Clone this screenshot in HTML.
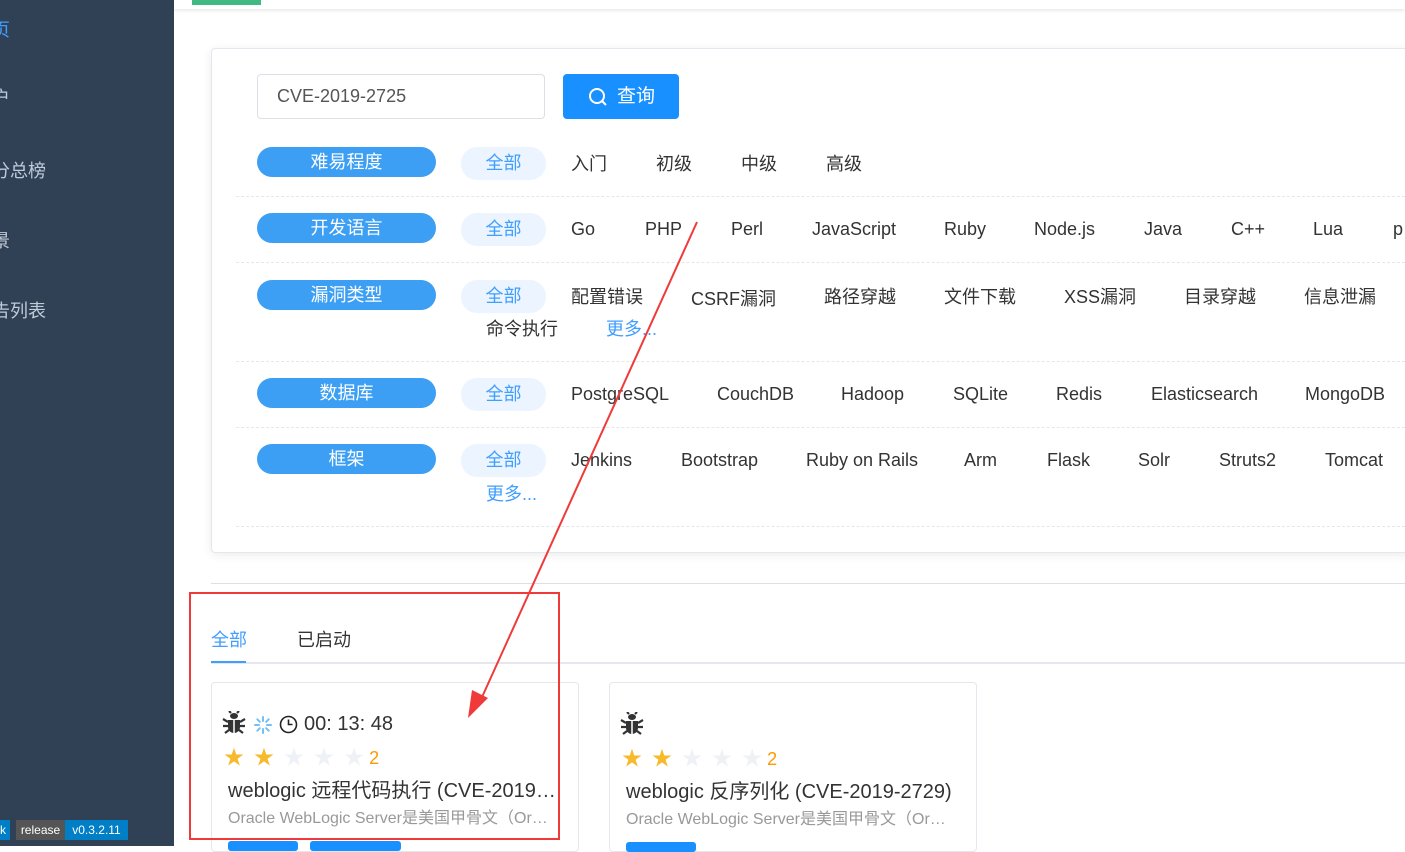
<!DOCTYPE html>
<html><head><meta charset="utf-8"><style>
*{margin:0;padding:0;box-sizing:border-box}
body{width:1405px;height:846px;overflow:hidden;background:#fff;font-family:"Liberation Sans","Noto Sans CJK SC",sans-serif;position:relative;color:#333}
.side{position:absolute;left:0;top:0;width:174px;height:846px;background:#304156}
.side div{position:absolute;left:-8px;font-size:18px;color:#bfcbd9}
.top{position:absolute;left:174px;top:0;right:0;height:9px;box-shadow:0 1px 4px rgba(0,0,0,.12)}
.green{position:absolute;left:192px;top:0;width:69px;height:5px;background:#42b983}
.card{position:absolute;left:211px;top:48px;width:1200px;height:505px;border:1px solid #e4e7ed;border-radius:4px;box-shadow:0 2px 10px rgba(0,0,0,.08)}
.a{position:absolute;font-size:18px;white-space:nowrap}
.lab{position:absolute;left:257px;width:179px;height:30px;background:#3d9ff3;border-radius:15px;color:#fff;font-size:18px;text-align:center;line-height:30px}
.all{position:absolute;left:461px;width:85px;height:33px;background:#ecf5ff;border-radius:16px;color:#409eff;font-size:18px;text-align:center;line-height:33px}
.hr{position:absolute;left:236px;right:0;border-top:1px dashed #e4e7ed}
.vc{position:absolute;top:682px;width:368px;height:170px;border:1px solid #e4e7ed;border-radius:4px}
.star{color:#f7ba2a;font-size:20px}
.gs{color:#eef1f6;font-size:20px}
</style></head><body>
<div class="side">
<div style="top:16px;color:#409eff">页</div>
<div style="top:84px">户</div>
<div style="top:157px">分总榜</div>
<div style="top:227px">景</div>
<div style="top:297px">告列表</div>
<span style="position:absolute;left:0;top:820px;height:20px;width:10px;background:#007ec6;color:#fff;font-size:12px;line-height:20px">k</span>
<span style="position:absolute;left:16px;top:820px;height:20px;width:49px;background:#555;color:#fff;font-size:12px;line-height:20px;text-align:center">release</span>
<span style="position:absolute;left:65px;top:820px;height:20px;width:63px;background:#007ec6;color:#fff;font-size:12px;line-height:20px;text-align:center">v0.3.2.11</span>
</div>
<div class="top"></div><div class="green"></div>
<div class="card"></div>
<div style="position:absolute;left:257px;top:74px;width:288px;height:45px;border:1px solid #dcdfe6;border-radius:4px;font-size:18px;line-height:43px;padding-left:19px;color:#555">CVE-2019-2725</div>
<div style="position:absolute;left:563px;top:74px;width:116px;height:45px;background:#1890ff;border-radius:4px;color:#fff;font-size:19px;line-height:45px;padding-left:54px"><svg style="position:absolute;left:25px;top:13px" width="20" height="20" viewBox="0 0 20 20"><circle cx="9" cy="9" r="7" fill="none" stroke="#fff" stroke-width="2"/><path d="M14 14l4 4" stroke="#fff" stroke-width="2"/></svg>查询</div>

<div class="lab" style="top:147px">难易程度</div><div class="all" style="top:147px">全部</div>
<div class="a" style="left:571px;top:150px">入门</div><div class="a" style="left:656px;top:150px">初级</div><div class="a" style="left:741px;top:150px">中级</div><div class="a" style="left:826px;top:150px">高级</div>
<div class="hr" style="top:196px"></div>
<div class="lab" style="top:213px">开发语言</div><div class="all" style="top:213px">全部</div>
<div class="a" style="left:571px;top:219px">Go</div><div class="a" style="left:645px;top:219px">PHP</div><div class="a" style="left:731px;top:219px">Perl</div><div class="a" style="left:812px;top:219px">JavaScript</div><div class="a" style="left:944px;top:219px">Ruby</div><div class="a" style="left:1034px;top:219px">Node.js</div><div class="a" style="left:1144px;top:219px">Java</div><div class="a" style="left:1231px;top:219px">C++</div><div class="a" style="left:1313px;top:219px">Lua</div><div class="a" style="left:1393px;top:219px">p</div>
<div class="hr" style="top:262px"></div>
<div class="lab" style="top:280px">漏洞类型</div><div class="all" style="top:280px">全部</div>
<div class="a" style="left:571px;top:283px">配置错误</div><div class="a" style="left:691px;top:285px">CSRF漏洞</div><div class="a" style="left:824px;top:283px">路径穿越</div><div class="a" style="left:944px;top:283px">文件下载</div><div class="a" style="left:1064px;top:283px">XSS漏洞</div><div class="a" style="left:1184px;top:283px">目录穿越</div><div class="a" style="left:1304px;top:283px">信息泄漏</div>
<div class="a" style="left:486px;top:315px">命令执行</div><div class="a" style="left:606px;top:315px;color:#409eff">更多...</div>
<div class="hr" style="top:361px"></div>
<div class="lab" style="top:378px">数据库</div><div class="all" style="top:378px">全部</div>
<div class="a" style="left:571px;top:384px">PostgreSQL</div><div class="a" style="left:717px;top:384px">CouchDB</div><div class="a" style="left:841px;top:384px">Hadoop</div><div class="a" style="left:953px;top:384px">SQLite</div><div class="a" style="left:1056px;top:384px">Redis</div><div class="a" style="left:1151px;top:384px">Elasticsearch</div><div class="a" style="left:1305px;top:384px">MongoDB</div>
<div class="hr" style="top:427px"></div>
<div class="lab" style="top:444px">框架</div><div class="all" style="top:444px">全部</div>
<div class="a" style="left:571px;top:450px">Jenkins</div><div class="a" style="left:681px;top:450px">Bootstrap</div><div class="a" style="left:806px;top:450px">Ruby on Rails</div><div class="a" style="left:964px;top:450px">Arm</div><div class="a" style="left:1047px;top:450px">Flask</div><div class="a" style="left:1138px;top:450px">Solr</div><div class="a" style="left:1219px;top:450px">Struts2</div><div class="a" style="left:1325px;top:450px">Tomcat</div>
<div class="a" style="left:486px;top:480px;color:#409eff">更多...</div>
<div class="hr" style="top:526px"></div>

<div style="position:absolute;left:211px;right:0;top:583px;border-top:1px solid #dcdfe6"></div>
<div class="a" style="left:211px;top:626px;color:#409eff">全部</div>
<div class="a" style="left:297px;top:626px">已启动</div>
<div style="position:absolute;left:211px;right:0;top:662px;border-top:2px solid #e4e7ed"></div>
<div style="position:absolute;left:211px;width:35px;top:661px;border-top:2px solid #409eff"></div>

<div class="vc" style="left:211px"></div>
<div class="vc" style="left:609px"></div>
<svg style="position:absolute;left:222px;top:711px" width="24" height="24" viewBox="0 0 24 24"><g fill="#333"><ellipse cx="12" cy="5" rx="4" ry="3"/><path d="M6 9h12v7a6 6 0 0 1-12 0z"/></g><g stroke="#333" stroke-width="2.2" fill="none"><path d="M6 11L1 8M6 15H1M7 19l-4 3M18 11l5-3M18 15h5M17 19l4 3M9 2L7 0M15 2l2-2"/></g><path d="M12 9v13" stroke="#fff" stroke-width="1.5"/></svg>
<svg style="position:absolute;left:620px;top:712px" width="24" height="24" viewBox="0 0 24 24"><g fill="#333"><ellipse cx="12" cy="5" rx="4" ry="3"/><path d="M6 9h12v7a6 6 0 0 1-12 0z"/></g><g stroke="#333" stroke-width="2.2" fill="none"><path d="M6 11L1 8M6 15H1M7 19l-4 3M18 11l5-3M18 15h5M17 19l4 3M9 2L7 0M15 2l2-2"/></g><path d="M12 9v13" stroke="#fff" stroke-width="1.5"/></svg>
<svg style="position:absolute;left:253px;top:715px" width="20" height="20" viewBox="0 0 20 20"><g stroke="#73bff8" stroke-width="2" stroke-linecap="round"><path d="M10 2v4M10 14v4M2 10h4M14 10h4M4.3 4.3l2.5 2.5M13.2 13.2l2.5 2.5M4.3 15.7l2.5-2.5M13.2 6.8l2.5-2.5"/></g></svg>
<svg style="position:absolute;left:279px;top:715px" width="19" height="19" viewBox="0 0 19 19"><circle cx="9.5" cy="9.5" r="8" fill="none" stroke="#222" stroke-width="1.6"/><path d="M9.5 4.5v5h4" fill="none" stroke="#222" stroke-width="1.6"/></svg>
<div class="a" style="left:304px;top:713px;font-size:20px">00: 13: 48</div>
<div class="a" style="left:224px;top:741px"><span class="star">★</span>&nbsp;&nbsp;<span class="star">★</span>&nbsp;&nbsp;<span class="gs">★</span>&nbsp;&nbsp;<span class="gs">★</span>&nbsp;&nbsp;<span class="gs">★</span> <span style="color:#ff9900">2</span></div>
<div class="a" style="left:228px;top:774px;font-size:20px">weblogic 远程代码执行 (CVE-2019…</div>
<div class="a" style="left:228px;top:804px;font-size:16px;color:#999">Oracle WebLogic Server是美国甲骨文（Or…</div>
<div class="a" style="left:622px;top:742px"><span class="star">★</span>&nbsp;&nbsp;<span class="star">★</span>&nbsp;&nbsp;<span class="gs">★</span>&nbsp;&nbsp;<span class="gs">★</span>&nbsp;&nbsp;<span class="gs">★</span> <span style="color:#ff9900">2</span></div>
<div class="a" style="left:626px;top:775px;font-size:20px">weblogic 反序列化 (CVE-2019-2729)</div>
<div class="a" style="left:626px;top:805px;font-size:16px;color:#999">Oracle WebLogic Server是美国甲骨文（Or…</div>
<div style="position:absolute;left:228px;top:841px;width:70px;height:10px;background:#1890ff;border-radius:3px"></div>
<div style="position:absolute;left:310px;top:841px;width:91px;height:10px;background:#1890ff;border-radius:3px"></div>
<div style="position:absolute;left:626px;top:842px;width:70px;height:10px;background:#1890ff;border-radius:3px"></div>

<div style="position:absolute;left:189px;top:592px;width:371px;height:248px;border:2px solid #f03a3a"></div>
<svg style="position:absolute;left:0;top:0" width="1405" height="846"><path d="M697 222L478 706" stroke="#f03a3a" stroke-width="2"/><path d="M468 718L472 690L488 698Z" fill="#f03a3a"/></svg>
</body></html>
